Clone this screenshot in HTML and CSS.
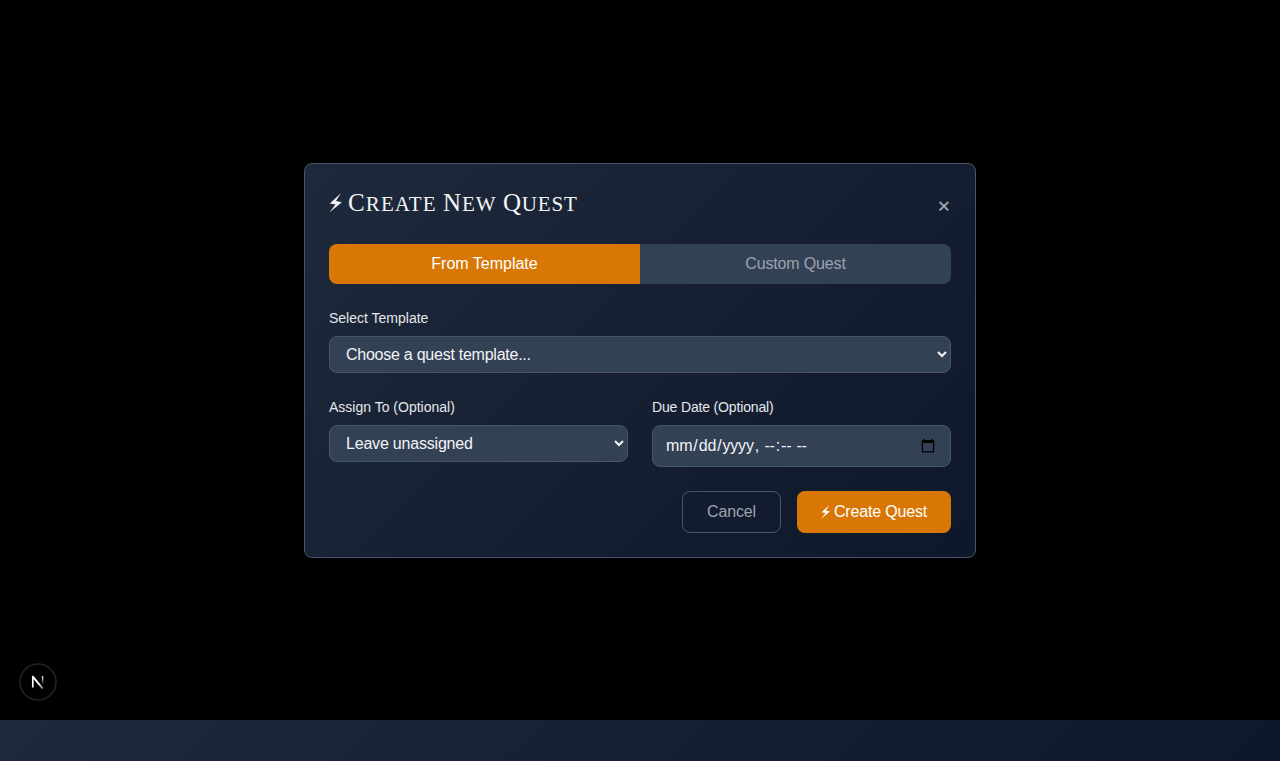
FILE: index.html
```html
<!DOCTYPE html>
<html lang="en">
<head>
<meta charset="utf-8">
<title>Create New Quest</title>
<link rel="stylesheet" href="styles.css">
</head>
<body>
<main class="overlay">
  <form class="modal">
    <header class="modal-header">
      <h2 class="title">
        <svg class="bolt" width="13" height="20" viewBox="0 0 13 20" fill="currentColor"><path d="M11.9.2L.8 10.4l5.8 1.2L.4 19.6 12.8 9.2 7 8z"/></svg>
        <span class="title-text"><span class="word create">Create</span> <span class="word new">New</span> <span class="word quest">Quest</span></span>
      </h2>
      <button type="button" class="close" aria-label="Close">×</button>
    </header>
    <div class="tabs">
      <button type="button" class="tab active">From Template</button>
      <button type="button" class="tab custom">Custom Quest</button>
    </div>
    <div class="field">
      <label class="label" for="template">Select Template</label>
      <select class="control template" id="template"><option>Choose a quest template...</option></select>
    </div>
    <div class="row">
      <div class="field">
        <label class="label" for="assignee">Assign To (Optional)</label>
        <select class="control assignee" id="assignee"><option>Leave unassigned</option></select>
      </div>
      <div class="field">
        <label class="label due-label" for="due">Due Date (Optional)</label>
        <input class="control date" id="due" type="datetime-local">
      </div>
    </div>
    <footer class="actions">
      <button type="button" class="button cancel">Cancel</button>
      <button type="button" class="button primary"><svg width="9" height="14" viewBox="0 0 13 20" fill="currentColor"><path d="M11.9.2L.8 10.4l5.8 1.2L.4 19.6 12.8 9.2 7 8z"/></svg><span>Create Quest</span></button>
    </footer>
  </form>
  <div class="badge">
    <svg width="38" height="38" viewBox="0 0 38 38" fill="none">
      <defs>
        <linearGradient id="diagonal" x1="20" y1="20" x2="26" y2="27" gradientUnits="userSpaceOnUse"><stop stop-color="#fff"/><stop offset="1" stop-color="#fff" stop-opacity=".2"/></linearGradient>
        <linearGradient id="stem" x1="24" y1="13" x2="24" y2="22" gradientUnits="userSpaceOnUse"><stop stop-color="#fff"/><stop offset="1" stop-color="#fff" stop-opacity="0"/></linearGradient>
      </defs>
      <circle cx="19" cy="19" r="18" fill="#000" stroke="#222" stroke-width="1.7"/>
      <path d="M13.8 24.5V13.8" stroke="#fff" stroke-width="1.7"/>
      <path d="M13.4 13.2L23.8 25.7" stroke="url(#diagonal)" stroke-width="1.9"/>
      <path d="M23.6 13.2V21.5" stroke="url(#stem)" stroke-width="1.5"/>
    </svg>
  </div>
</main>
<div class="page-end"></div>
</body>
</html>
```
FILE: styles.css
```css
* { box-sizing: border-box; }
body { margin: 0; background: #000; font-family: "Liberation Sans", Arial, sans-serif; font-size: 16px; line-height: 24px; }
button, select, input { font: inherit; margin: 0; }
.overlay { position: relative; display: flex; align-items: center; justify-content: center; height: 720px; background: #000; }
.page-end { height: 41px; background: linear-gradient(135deg, #1e293b 0%, #0f172a 100%); }
.modal { width: 672px; height: 395px; padding: 24px; border: 1px solid #475569; border-radius: 8px; background: linear-gradient(135deg, #1e293b 0%, #0f172a 100%); }
.modal-header { display: flex; align-items: center; justify-content: space-between; height: 32px; margin-bottom: 24px; }
.title { display: flex; align-items: center; gap: 6px; margin: 0; color: #f3f4f6; font: 400 21px/32px "Liberation Serif", serif; }
.bolt { margin-bottom: 2px; }
.title-text { display: flex; align-items: baseline; gap: 7px; height: 34px; }
.word { display: block; text-transform: uppercase; white-space: nowrap; }
.word::first-letter { font-size: 25px; }
.create { width: 88px; letter-spacing: 1.1px; }
.new { width: 53px; letter-spacing: 0.9px; }
.quest { width: 75px; letter-spacing: 0.8px; }
.close { padding: 5px 1px 0 0; border: 0; background: none; color: #9ca3af; font-size: 21px; line-height: 24px; -webkit-text-stroke: 0.4px #9ca3af; }
.tabs { display: flex; height: 40px; margin-bottom: 24px; border-radius: 8px; overflow: hidden; }
.tab { flex: 1; padding: 0; border: 0; background: #334155; color: #9ca3af; }
.tab.active { background: #d97706; color: #fff; }
.custom { letter-spacing: -0.15px; }
.label { display: block; margin-bottom: 8px; color: #e5e7eb; font-size: 14px; line-height: 20px; }
.due-label { letter-spacing: -0.16px; }
.control { display: block; width: 100%; height: 37px; padding: 0 12px; border: 1px solid #475569; border-radius: 8px; background-color: #334155; color: #f3f4f6; }
.template { letter-spacing: -0.25px; }
.assignee { letter-spacing: -0.2px; }
.date { height: 42px; letter-spacing: -0.16px; }
.row { display: grid; grid-template-columns: 1fr 1fr; gap: 24px; margin: 24px 0; }
.actions { display: flex; justify-content: flex-end; gap: 16px; }
.button { display: flex; align-items: center; justify-content: center; height: 42px; padding: 0; border-radius: 8px; }
.cancel { width: 99px; border: 1px solid #475569; background: none; color: #9ca3af; letter-spacing: -0.15px; }
.primary { width: 154px; gap: 4px; border: 0; background: #d97706; color: #fff; letter-spacing: -0.16px; }
.badge { position: absolute; left: 19px; bottom: 19px; width: 38px; height: 38px; }
.badge svg { display: block; }
```
